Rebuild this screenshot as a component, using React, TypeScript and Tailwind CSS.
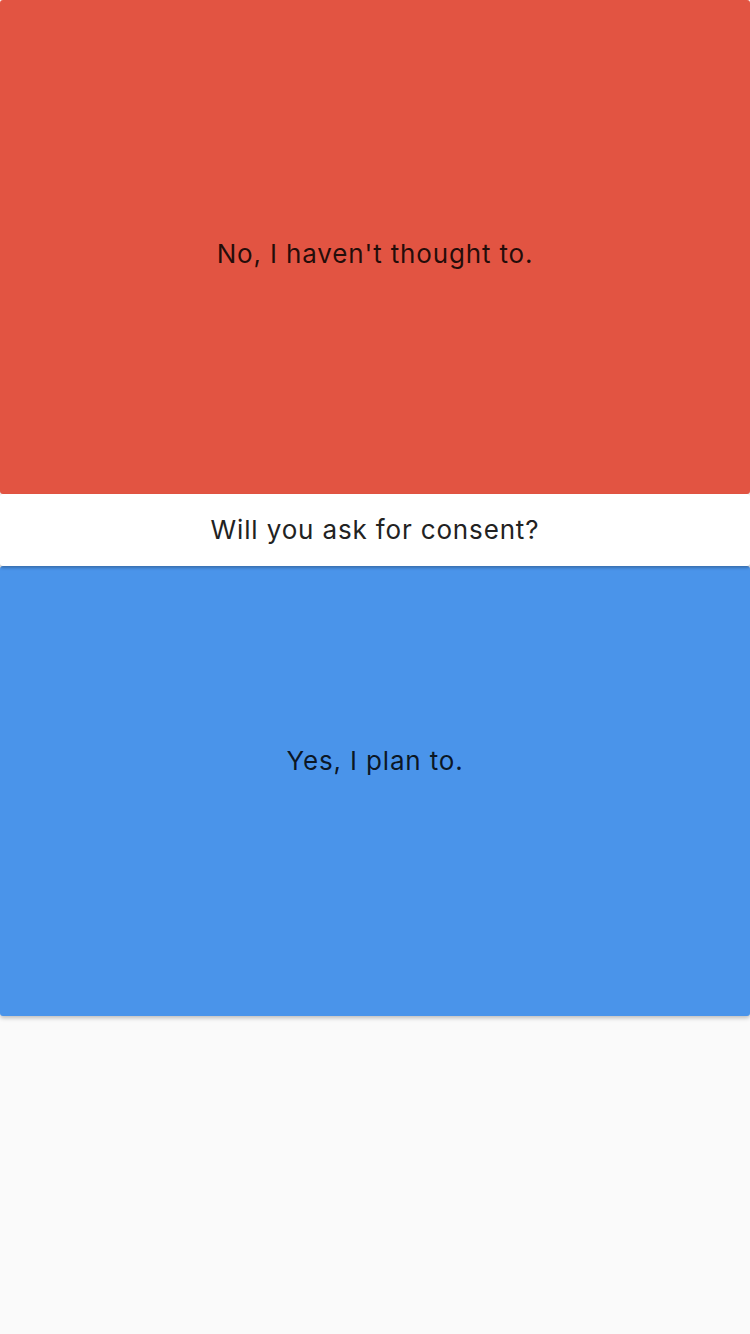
import React from 'react'

const font = { fontFamily: 'Inter, "Noto Sans", sans-serif' }

const App = () => {
  return (
    <div className="min-h-[1334px] w-full bg-[#fafafa]" style={font}>
      <div className="flex flex-col">
        <div className="flex h-[494px] items-center justify-center rounded-[3px] bg-[#e25442] pt-[12px] shadow-md">
          <span className="text-[26px] tracking-[0.85px] text-black/85">No, I haven't thought to.</span>
        </div>
        <div className="relative z-10 flex h-[72px] items-center justify-center rounded-[3px] bg-white pb-[2px] shadow-[0_2px_3px_rgba(0,0,0,0.25)]">
          <span className="text-[26px] tracking-[0.85px] text-[#222]">Will you ask for consent?</span>
        </div>
        <div className="flex h-[450px] items-center justify-center rounded-[3px] bg-[#4a94ea] pb-[62px] shadow-[0_2px_4px_rgba(0,0,0,0.25)]">
          <span className="text-[26px] tracking-[0.85px] text-black/85">Yes, I plan to.</span>
        </div>
      </div>
    </div>
  )
}

export default App
